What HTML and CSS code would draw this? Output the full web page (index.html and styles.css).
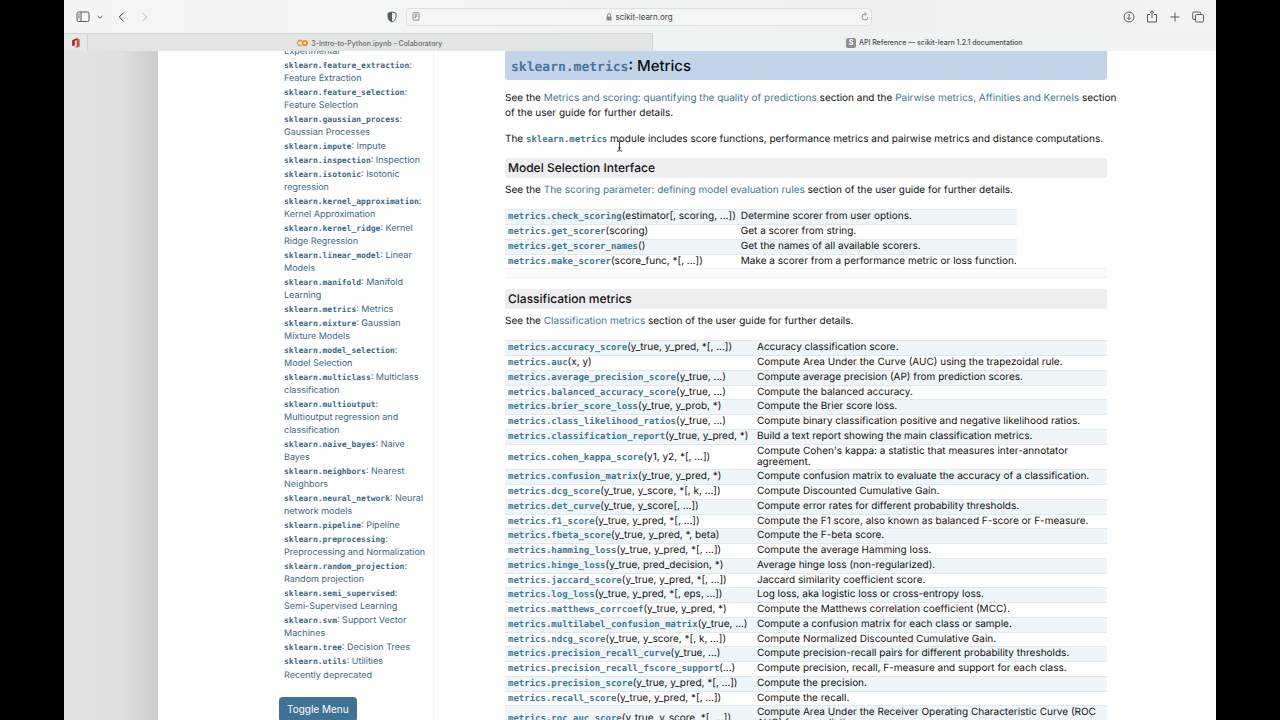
FILE: index.html
```
<!DOCTYPE html>
<html lang="en">
<head>
<meta charset="utf-8">
<title>API Reference — scikit-learn 1.2.1 documentation</title>
<link rel="stylesheet" href="styles.css">
</head>
<body>
<div class="window">
  <header class="toolbar">
    <div class="tools-left">
      <button class="icon-btn" aria-label="Show sidebar"><svg width="14" height="12" viewBox="0 0 14 12"><rect x="1" y="1" width="12" height="9.5" rx="1.5"/><path d="M5 1v9.500M2.300 3.200h1.400M2.300 5h1.400M2.300 6.800h1.400"/></svg></button>
      <button class="icon-btn chevron" aria-label="Tab groups"><svg width="6" height="6" viewBox="0 0 6 6"><path d="M.6 2L3 4.200 5.400 2"/></svg></button>
      <button class="icon-btn back" aria-label="Back"><svg width="7" height="10" viewBox="0 0 7 10"><path d="M5.500 .8L1.300 5l4.200 4.200"/></svg></button>
      <button class="icon-btn forward" aria-label="Forward" disabled><svg width="7" height="10" viewBox="0 0 7 10"><path d="M1.500 .8L5.700 5 1.500 9.200"/></svg></button>
      <button class="icon-btn shield" aria-label="Privacy report"><svg width="10" height="12" viewBox="0 0 10 12"><path d="M5 1L9 2.200v3.600C9 8.300 7.300 10 5 11 2.700 10 1 8.300 1 5.800V2.200z"/><path class="solid" d="M5 1v10C2.700 10 1 8.300 1 5.800V2.200z"/></svg></button>
    </div>
    <div class="address">
      <button class="icon-btn small" aria-label="Reader"><svg width="8" height="9" viewBox="0 0 8 9"><rect x="1" y=".8" width="6" height="7.400" rx=".8"/><path d="M2.500 2.800h3M2.500 4.200h3M2.500 5.600h1.500"/></svg></button>
      <div class="location">
        <svg class="lock" width="6" height="8" viewBox="0 0 6 8"><rect class="lock-body" x=".5" y="3.500" width="5" height="4" rx=".6"/><path d="M1.500 4V2.200a1.500 1.500 0 013 0V4"/></svg>
        <input type="text" value="scikit-learn.org" aria-label="Address">
      </div>
      <button class="icon-btn small" aria-label="Reload"><svg width="8" height="9" viewBox="0 0 8 9"><path d="M4 2a3 3 0 103 3M3.600 .4L5.400 2 3.600 3.700"/></svg></button>
    </div>
    <div class="tools-right">
      <button class="icon-btn" aria-label="Downloads"><svg width="12" height="12" viewBox="0 0 12 12"><circle cx="6" cy="6" r="5"/><path d="M6 3v5.500M3.900 6.500L6 8.600l2.100-2.100"/></svg></button>
      <button class="icon-btn" aria-label="Share"><svg width="12" height="13" viewBox="0 0 12 13"><path d="M4 4.500H1.500v7.500h9V4.500H8M6 8V1M3.800 3L6 .9 8.200 3"/></svg></button>
      <button class="icon-btn" aria-label="New tab"><svg width="12" height="12" viewBox="0 0 12 12"><path d="M6 1.500v9M1.500 6h9"/></svg></button>
      <button class="icon-btn" aria-label="Tab overview"><svg width="12" height="12" viewBox="0 0 12 12"><rect x="3.500" y="3.500" width="8" height="7.500" rx="1.300"/><path d="M3.500 8.500H2A1.300 1.300 0 01.7 7.200V2.300A1.300 1.300 0 012 1h5.500a1.300 1.300 0 011.300 1.300v1.200"/></svg></button>
    </div>
  </header>
  <nav class="tabs" aria-label="Tabs">
    <button class="tab pinned" aria-label="Office"><svg width="8" height="10" viewBox="0 0 8 10"><path fill="#d8492a" d="M4.800.3L7.600 1.400v7.200L4.800 9.700 1.600 8.500l3.200.2V2L2.600 2.700v4.600L.4 8.100V2.200z"/><path fill="#9b2430" d="M.4 2.200L4.800.3V2L2.600 2.700v4.600L.4 8.100z"/></svg></button>
    <button class="tab inactive"><svg width="11" height="8" viewBox="0 0 11 8" fill="none" stroke-width="1.600"><path stroke="#f0a030" d="M4.800 2.300a2.400 2.400 0 100 3.400"/><circle stroke="#e58a22" cx="7.800" cy="4" r="2.300"/></svg>3-Intro-to-Python.ipynb - Colaboratory</button>
    <button class="tab active"><span class="favicon">S</span>API Reference — scikit-learn 1.2.1 documentation</button>
  </nav>
  <div class="page">
    <div class="backdrop"></div>
    <aside class="sidebar">
      <ul class="toc">
        <li><a href="#">Experimental</a></li>
        <li><a href="#"><code>sklearn.feature_extraction</code>:<br>Feature Extraction</a></li>
        <li><a href="#"><code>sklearn.feature_selection</code>:<br>Feature Selection</a></li>
        <li><a href="#"><code>sklearn.gaussian_process</code>:<br>Gaussian Processes</a></li>
        <li><a href="#"><code>sklearn.impute</code>: Impute</a></li>
        <li><a href="#"><code>sklearn.inspection</code>: Inspection</a></li>
        <li><a href="#"><code>sklearn.isotonic</code>: Isotonic<br>regression</a></li>
        <li><a href="#"><code>sklearn.kernel_approximation</code>:<br>Kernel Approximation</a></li>
        <li><a href="#"><code>sklearn.kernel_ridge</code>: Kernel<br>Ridge Regression</a></li>
        <li><a href="#"><code>sklearn.linear_model</code>: Linear<br>Models</a></li>
        <li><a href="#"><code>sklearn.manifold</code>: Manifold<br>Learning</a></li>
        <li><a href="#"><code>sklearn.metrics</code>: Metrics</a></li>
        <li><a href="#"><code>sklearn.mixture</code>: Gaussian<br>Mixture Models</a></li>
        <li><a href="#"><code>sklearn.model_selection</code>:<br>Model Selection</a></li>
        <li><a href="#"><code>sklearn.multiclass</code>: Multiclass<br>classification</a></li>
        <li><a href="#"><code>sklearn.multioutput</code>:<br>Multioutput regression and<br>classification</a></li>
        <li><a href="#"><code>sklearn.naive_bayes</code>: Naive<br>Bayes</a></li>
        <li><a href="#"><code>sklearn.neighbors</code>: Nearest<br>Neighbors</a></li>
        <li><a href="#"><code>sklearn.neural_network</code>: Neural<br>network models</a></li>
        <li><a href="#"><code>sklearn.pipeline</code>: Pipeline</a></li>
        <li><a href="#"><code>sklearn.preprocessing</code>:<br>Preprocessing and Normalization</a></li>
        <li><a href="#"><code>sklearn.random_projection</code>:<br>Random projection</a></li>
        <li><a href="#"><code>sklearn.semi_supervised</code>:<br>Semi-Supervised Learning</a></li>
        <li><a href="#"><code>sklearn.svm</code>: Support Vector<br>Machines</a></li>
        <li><a href="#"><code>sklearn.tree</code>: Decision Trees</a></li>
        <li><a href="#"><code>sklearn.utils</code>: Utilities</a></li>
        <li><a href="#">Recently deprecated</a></li>
      </ul>
      <button class="toggle">Toggle Menu</button>
    </aside>
    <main class="content">
      <h2><a href="#"><code>sklearn.metrics</code></a>: Metrics</h2>
      <p>See the <a href="#">Metrics and scoring: quantifying the quality of predictions</a> section and the <a href="#">Pairwise metrics, Affinities and Kernels</a> section<br>of the user guide for further details.</p>
      <p>The <a href="#"><code>sklearn.metrics</code></a> module includes score functions, performance metrics and pairwise metrics and distance computations.</p>
      <h3>Model Selection Interface</h3>
      <p>See the <a href="#">The scoring parameter: defining model evaluation rules</a> section of the user guide for further details.</p>
      <table class="api scorers">
        <tr><td><a href="#"><code>metrics.check_scoring</code></a>(estimator[, scoring, ...])</td><td>Determine scorer from user options.</td></tr>
        <tr><td><a href="#"><code>metrics.get_scorer</code></a>(scoring)</td><td>Get a scorer from string.</td></tr>
        <tr><td><a href="#"><code>metrics.get_scorer_names</code></a>()</td><td>Get the names of all available scorers.</td></tr>
        <tr><td><a href="#"><code>metrics.make_scorer</code></a>(score_func, *[, ...])</td><td>Make a scorer from a performance metric or loss function.</td></tr>
      </table>
      <div class="band"></div>
      <h3>Classification metrics</h3>
      <p>See the <a href="#">Classification metrics</a> section of the user guide for further details.</p>
      <table class="api classification">
        <tr><td><a href="#"><code>metrics.accuracy_score</code></a>(y_true, y_pred, *[, ...])</td><td>Accuracy classification score.</td></tr>
        <tr><td><a href="#"><code>metrics.auc</code></a>(x, y)</td><td>Compute Area Under the Curve (AUC) using the trapezoidal rule.</td></tr>
        <tr><td><a href="#"><code>metrics.average_precision_score</code></a>(y_true, ...)</td><td>Compute average precision (AP) from prediction scores.</td></tr>
        <tr><td><a href="#"><code>metrics.balanced_accuracy_score</code></a>(y_true, ...)</td><td>Compute the balanced accuracy.</td></tr>
        <tr><td><a href="#"><code>metrics.brier_score_loss</code></a>(y_true, y_prob, *)</td><td>Compute the Brier score loss.</td></tr>
        <tr><td><a href="#"><code>metrics.class_likelihood_ratios</code></a>(y_true, ...)</td><td>Compute binary classification positive and negative likelihood ratios.</td></tr>
        <tr><td><a href="#"><code>metrics.classification_report</code></a>(y_true, y_pred, *)</td><td>Build a text report showing the main classification metrics.</td></tr>
        <tr><td><a href="#"><code>metrics.cohen_kappa_score</code></a>(y1, y2, *[, ...])</td><td>Compute Cohen's kappa: a statistic that measures inter-annotator<br>agreement.</td></tr>
        <tr><td><a href="#"><code>metrics.confusion_matrix</code></a>(y_true, y_pred, *)</td><td>Compute confusion matrix to evaluate the accuracy of a classification.</td></tr>
        <tr><td><a href="#"><code>metrics.dcg_score</code></a>(y_true, y_score, *[, k, ...])</td><td>Compute Discounted Cumulative Gain.</td></tr>
        <tr><td><a href="#"><code>metrics.det_curve</code></a>(y_true, y_score[, ...])</td><td>Compute error rates for different probability thresholds.</td></tr>
        <tr><td><a href="#"><code>metrics.f1_score</code></a>(y_true, y_pred, *[, ...])</td><td>Compute the F1 score, also known as balanced F-score or F-measure.</td></tr>
        <tr><td><a href="#"><code>metrics.fbeta_score</code></a>(y_true, y_pred, *, beta)</td><td>Compute the F-beta score.</td></tr>
        <tr><td><a href="#"><code>metrics.hamming_loss</code></a>(y_true, y_pred, *[, ...])</td><td>Compute the average Hamming loss.</td></tr>
        <tr><td><a href="#"><code>metrics.hinge_loss</code></a>(y_true, pred_decision, *)</td><td>Average hinge loss (non-regularized).</td></tr>
        <tr><td><a href="#"><code>metrics.jaccard_score</code></a>(y_true, y_pred, *[, ...])</td><td>Jaccard similarity coefficient score.</td></tr>
        <tr><td><a href="#"><code>metrics.log_loss</code></a>(y_true, y_pred, *[, eps, ...])</td><td>Log loss, aka logistic loss or cross-entropy loss.</td></tr>
        <tr><td><a href="#"><code>metrics.matthews_corrcoef</code></a>(y_true, y_pred, *)</td><td>Compute the Matthews correlation coefficient (MCC).</td></tr>
        <tr><td><a href="#"><code>metrics.multilabel_confusion_matrix</code></a>(y_true, ...)</td><td>Compute a confusion matrix for each class or sample.</td></tr>
        <tr><td><a href="#"><code>metrics.ndcg_score</code></a>(y_true, y_score, *[, k, ...])</td><td>Compute Normalized Discounted Cumulative Gain.</td></tr>
        <tr><td><a href="#"><code>metrics.precision_recall_curve</code></a>(y_true, ...)</td><td>Compute precision-recall pairs for different probability thresholds.</td></tr>
        <tr><td><a href="#"><code>metrics.precision_recall_fscore_support</code></a>(...)</td><td>Compute precision, recall, F-measure and support for each class.</td></tr>
        <tr><td><a href="#"><code>metrics.precision_score</code></a>(y_true, y_pred, *[, ...])</td><td>Compute the precision.</td></tr>
        <tr><td><a href="#"><code>metrics.recall_score</code></a>(y_true, y_pred, *[, ...])</td><td>Compute the recall.</td></tr>
        <tr><td><a href="#"><code>metrics.roc_auc_score</code></a>(y_true, y_score, *[, ...])</td><td>Compute Area Under the Receiver Operating Characteristic Curve (ROC<br>AUC) from prediction scores.</td></tr>
      </table>
    </main>
  </div>
</div>
<svg class="cursor" width="7" height="12" viewBox="0 0 7 12"><path d="M1 .8q2.500 0 2.500 1.700v7q0 1.700-2.500 1.700M6 .8q-2.500 0-2.500 1.700v7q0 1.700 2.500 1.700M2.200 8h2.600"/></svg>
</body>
</html>
```
FILE: styles.css
```
* { box-sizing: border-box; }
body {
  margin: 0;
  background: #000;
  color: #111;
  font: 10px/15px Inter, "Liberation Sans", sans-serif;
  text-rendering: geometricPrecision;
  overflow: hidden;
}
.window {
  display: flex;
  flex-direction: column;
  height: 100vh;
  margin: 0 5%;
  background: #fff;
}
a { color: #43789a; text-decoration: none; }
code { font: bold 9px "DejaVu Sans Mono", monospace; line-height: 0; }
button { border: 0; padding: 0; background: none; font: inherit; color: inherit; }

/* Browser toolbar */
.toolbar {
  flex: none;
  display: grid;
  grid-template-columns: 342fr 466fr 344fr;
  align-items: center;
  height: 33px;
  background: linear-gradient(90deg, #f4f4f4, #f2f6f5 30%, #edf0f1 70%, #f3f5f4);
}
.icon-btn { display: flex; color: #555a5c; }
.icon-btn svg { fill: none; stroke: currentColor; stroke-width: 1; }
.icon-btn .solid { fill: currentColor; stroke: none; }
.tools-left { display: flex; align-items: center; padding: 0 9px 0 12px; }
.chevron { margin-left: 7px; }
.back { margin-left: 15px; color: #333; }
.forward { margin-left: 16px; color: #b4b8b8; }
.shield { margin-left: auto; }
.address {
  display: flex;
  align-items: center;
  justify-content: space-between;
  height: 18px;
  padding: 0 2px 0 5px;
  border: 1px solid #dde2e1;
  border-radius: 4px;
  background: #f2f6f5;
}
.small { color: #8a8f90; }
.location { display: flex; align-items: center; gap: 4px; }
.lock { fill: none; stroke: #858a8b; }
.lock-body { fill: #858a8b; stroke: none; }
.location input {
  width: 60px;
  padding: 0;
  border: 0;
  background: none;
  color: #3f4446;
  font: 8px/12px Inter, sans-serif;
}
.tools-right {
  display: flex;
  align-items: center;
  justify-content: flex-end;
  gap: 11px;
  padding-right: 12px;
}
.tabs {
  flex: none;
  display: flex;
  height: 18px;
  background: #eff3f2;
  font-size: 7px;
  font-weight: 500;
}
.tab { display: flex; align-items: center; justify-content: center; gap: 3px; flex: 1; padding-top: 1px; color: #4a4f50; }
.inactive { background: #e1e5e4; border: solid #d0d4d3; border-width: 1px 1px 0; color: #6d7172; }
.pinned { flex: none; width: 23px; background: #e4e8e7; border-top: 1px solid #d0d4d3; }
.favicon {
  width: 10px;
  height: 10px;
  border-radius: 2px;
  background: #8c9095;
  color: #fff;
  font-weight: 700;
  line-height: 10px;
}

/* Document */
.page { flex: 1; min-height: 0; display: flex; overflow: hidden; }
.backdrop {
  flex: none;
  width: 94px;
  background: linear-gradient(90deg, #dfe4e1, #dde1e0 60%, #d3d7d6 80%, #cacecd);
}
.sidebar {
  flex: none;
  width: 276px;
  padding-left: 121px;
  border-right: 1px solid #f0f2f4;
}
.toc { list-style: none; margin: -6px 0 0; padding: 0 0 0 5px; font-size: 9px; line-height: 13px; white-space: nowrap; }
.toc li { padding-bottom: 1px; }
.toc a { color: #3a6886; }
.toc code { font-size: 8px; }
.toggle {
  display: block;
  margin-top: 14px;
  padding: 5px 8px;
  border-radius: 4px;
  background: #3f7295;
  color: #fff;
}
.content { flex: 1; min-width: 0; padding: 0 109px 0 71px; }
h2, h3 { margin: 0; background: #eeedef; font-weight: 500; white-space: nowrap; }
h2 {
  padding: 5px 6px 4px;
  border-radius: 0 0 3px 3px;
  background: #c3d4ea;
  font-size: 15px;
  line-height: 20px;
}
h2 code { font-size: 13px; }
h3 { padding: 2px 3px 3px; border-radius: 2px; font-size: 12px; line-height: 15px; margin-top: 11px; }
p { margin: 11px 0; white-space: nowrap; }
h3 + p { margin-top: 5px; }
.api { border-spacing: 0; line-height: 11px; white-space: nowrap; }
.api td { padding: 1px 0 2px 2px; border-top: 1px solid #e2e9ec; }
.api td:first-child { padding-left: 3px; }
.api tr:nth-child(odd) { background: #eff6f9; }
.api tr:nth-child(4n) td { padding-bottom: 1px; }
.scorers { width: 85%; }
.scorers td:first-child { width: 235px; }
.classification { width: 100%; }
.classification td:first-child { width: 250px; }
.band { height: 10px; border: solid #f3f1f4; border-width: 1px 0; background: #fbfafc; }
.cursor { position: absolute; left: 616px; top: 140px; fill: none; stroke: #333; }
```
